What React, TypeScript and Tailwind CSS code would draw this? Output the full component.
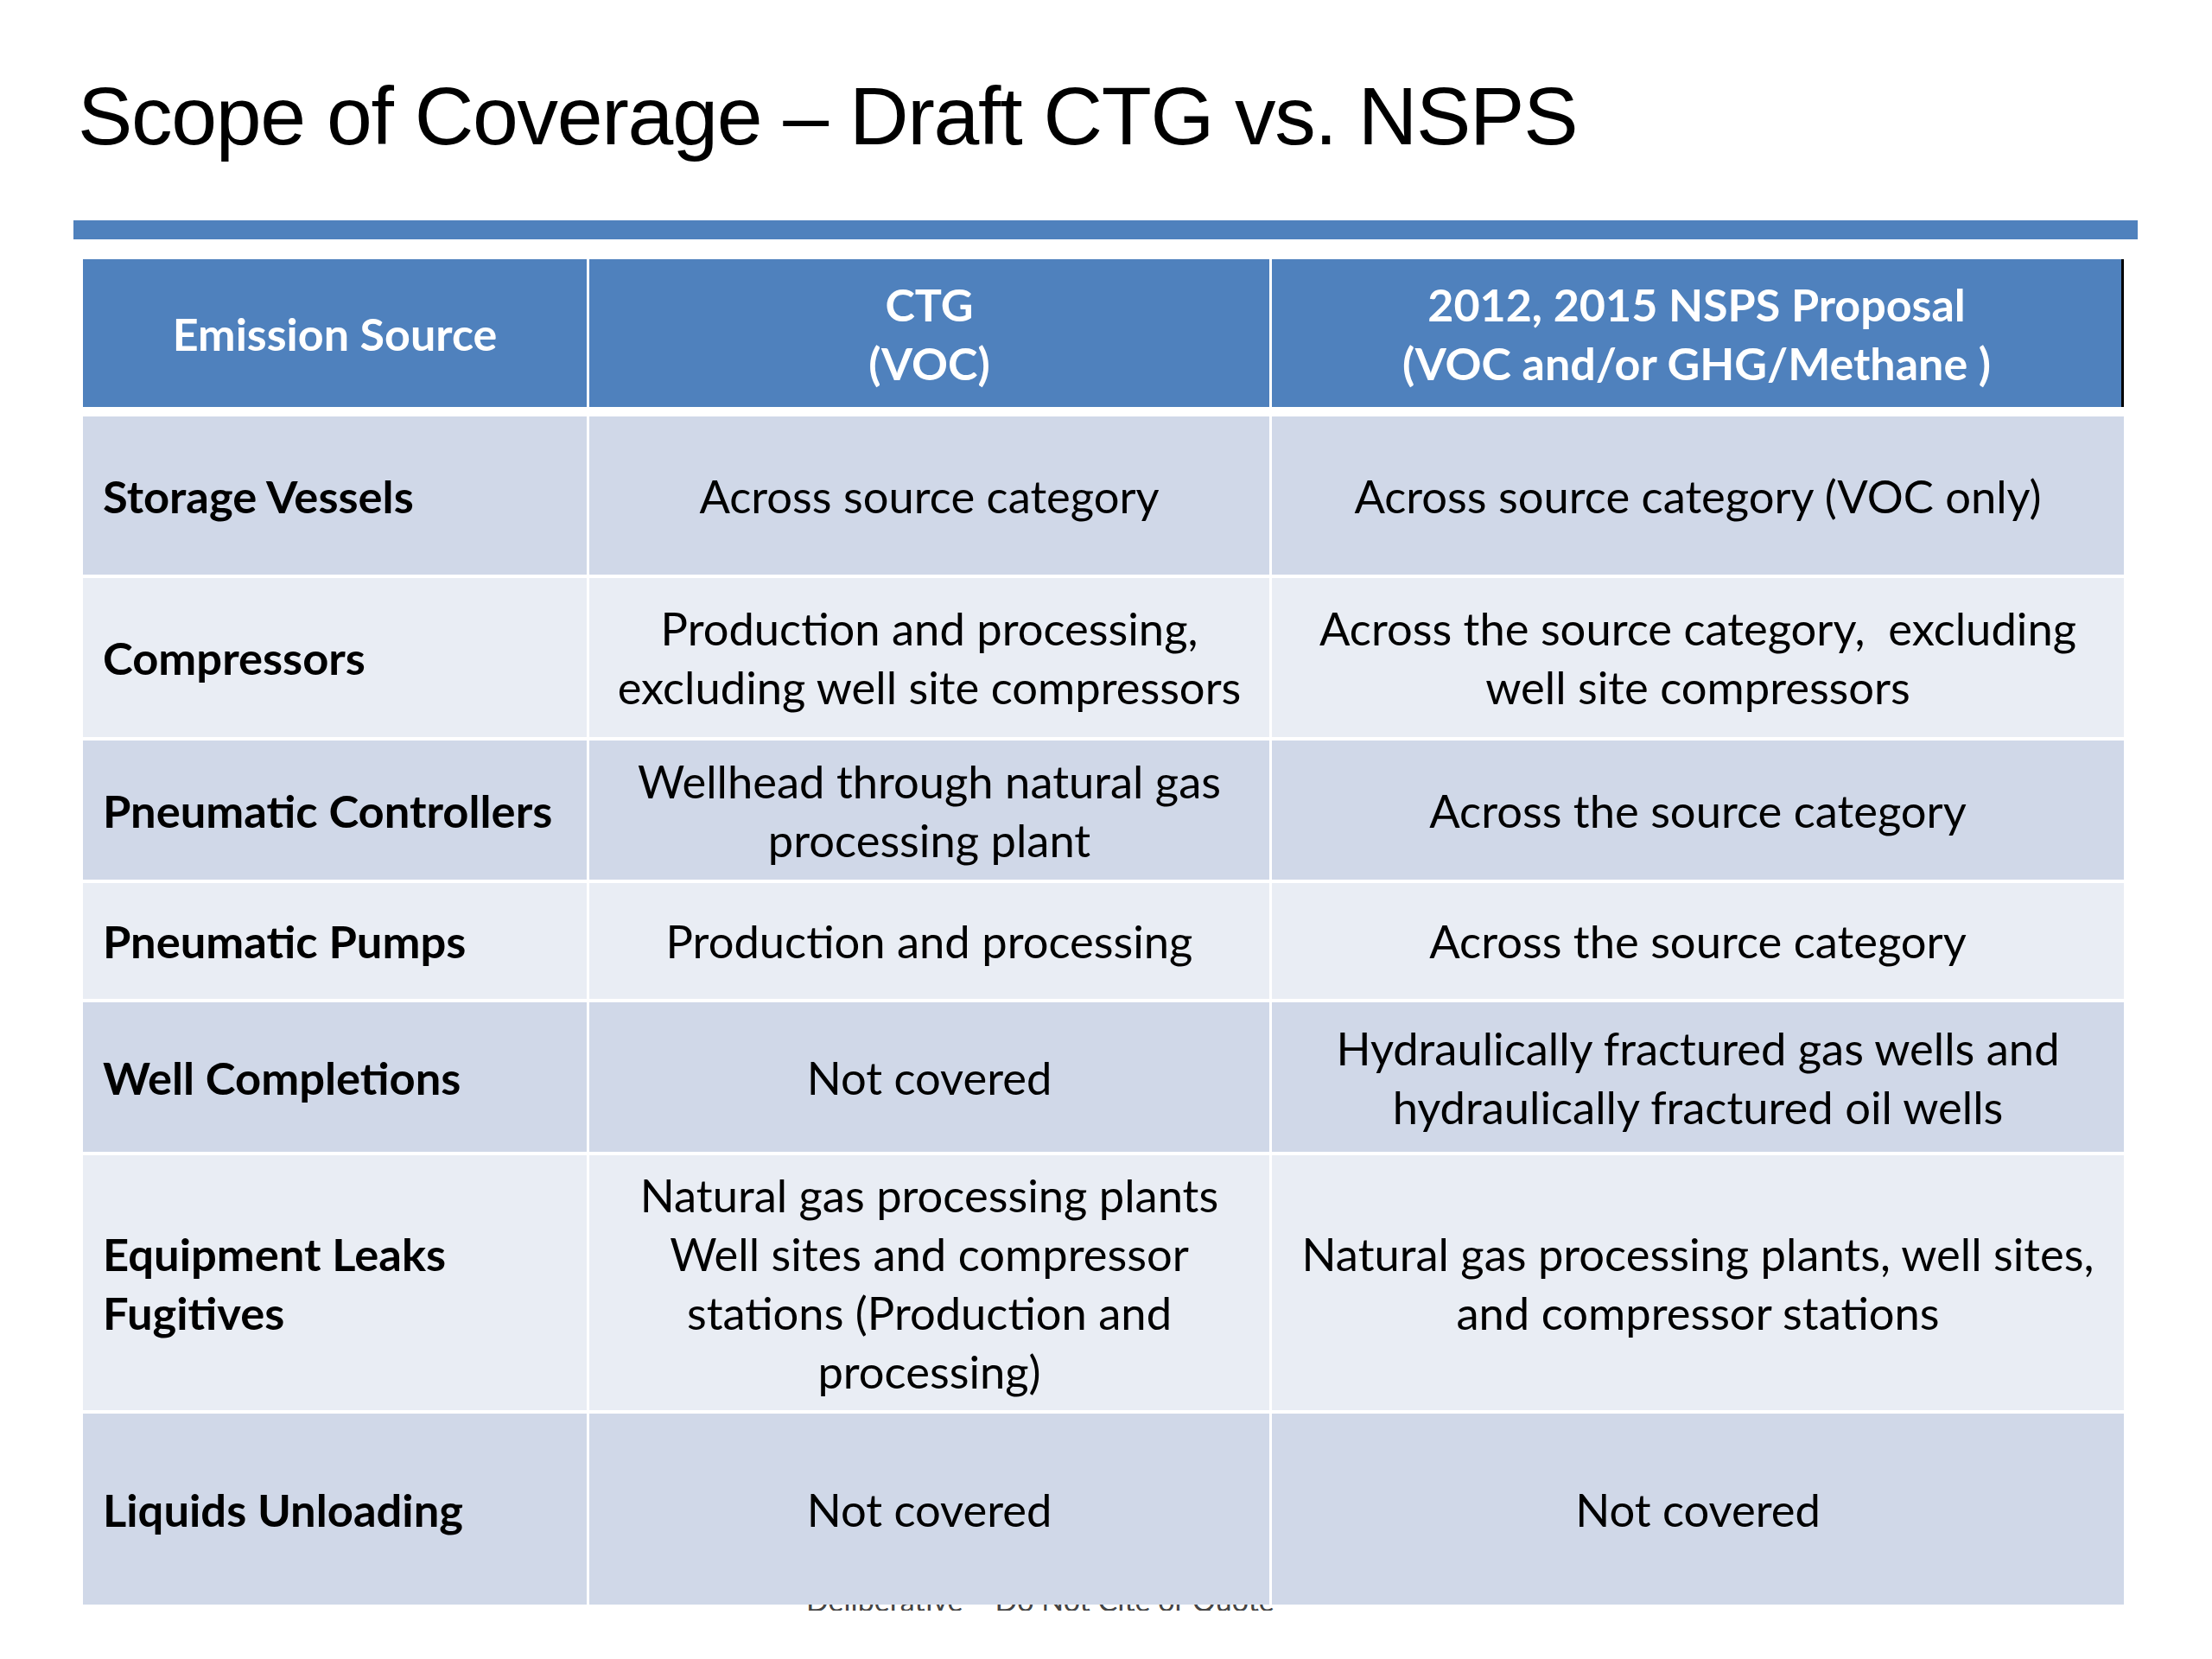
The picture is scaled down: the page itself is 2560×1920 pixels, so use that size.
import React from "react";

type Row = {
  h: string;
  bg: string;
  c1: string[];
  c2: string[];
  c3: string[];
};

const DARK = "bg-[#d0d8e8]";
const LIGHT = "bg-[#e9edf4]";

const rows: Row[] = [
  { h: "h-[183px]", bg: DARK, c1: ["Storage Vessels"], c2: ["Across source category"], c3: ["Across source category (VOC only)"] },
  {
    h: "h-[184px]",
    bg: LIGHT,
    c1: ["Compressors"],
    c2: ["Production and processing,", "excluding well site compressors"],
    c3: ["Across the source category,\u00a0 excluding", "well site compressors"],
  },
  {
    h: "h-[161px]",
    bg: DARK,
    c1: ["Pneumatic Controllers"],
    c2: ["Wellhead through natural gas", "processing plant"],
    c3: ["Across the source category"],
  },
  { h: "h-[134px]", bg: LIGHT, c1: ["Pneumatic Pumps"], c2: ["Production and processing"], c3: ["Across the source category"] },
  {
    h: "h-[173px]",
    bg: DARK,
    c1: ["Well Completions"],
    c2: ["Not covered"],
    c3: ["Hydraulically fractured gas wells and", "hydraulically fractured oil wells"],
  },
  {
    h: "h-[295px]",
    bg: LIGHT,
    c1: ["Equipment Leaks", "Fugitives"],
    c2: ["Natural gas processing plants", "Well sites and compressor", "stations (Production and", "processing)"],
    c3: ["Natural gas processing plants, well sites,", "and compressor stations"],
  },
  { h: "h-[221px]", bg: DARK, c1: ["Liquids Unloading"], c2: ["Not covered"], c3: ["Not covered"] },
];

function Lines({ lines }: { lines: string[] }) {
  return (
    <>
      {lines.map((l, i) => (
        <div key={i} className="whitespace-nowrap">
          {l}
        </div>
      ))}
    </>
  );
}

export default function App() {
  return (
    <div className="w-[2560px] h-[1920px] bg-white flex flex-col overflow-hidden">
      <div
        className="mt-[87px] ml-[90px] text-[95px] leading-[95px] tracking-[-1.3px] text-black whitespace-nowrap"
        style={{ fontFamily: '"Liberation Sans", Arial, sans-serif' }}
      >
        Scope of Coverage – Draft CTG vs. NSPS
      </div>

      <div className="mt-[73px] ml-[85px] w-[2389px] h-[22px] bg-[#4f81bd]" />

      <div
        className="mt-[23px] ml-[96px] w-[2365px] flex flex-col text-[52.5px] leading-[68px] text-black"
        style={{ fontFamily: 'Lato, "Open Sans", sans-serif' }}
      >
        {/* header */}
        <div className="flex h-[171px] gap-x-[3px] text-white font-bold text-[52px]">
          <div className="w-[583px] bg-[#4f81bd] flex items-center justify-center text-center">
            <Lines lines={["Emission Source"]} />
          </div>
          <div className="w-[787px] bg-[#4f81bd] flex flex-col items-center justify-center text-center">
            <Lines lines={["CTG", "(VOC)"]} />
          </div>
          <div className="w-[986px] bg-[#4f81bd] border-r-[3px] border-black flex flex-col items-center justify-center text-center">
            <Lines lines={["2012, 2015 NSPS Proposal", "(VOC and/or GHG/Methane )"]} />
          </div>
        </div>

        <div className="mt-[11px] w-[2362px] flex flex-col gap-y-[4px]">
          {rows.map((r, i) => (
            <div key={i} className={`flex gap-x-[3px] ${r.h}`}>
              <div className={`w-[583px] ${r.bg} flex flex-col justify-center pl-[23px] font-bold`}>
                <Lines lines={r.c1} />
              </div>
              <div className={`w-[787px] ${r.bg} flex flex-col items-center justify-center text-center`}>
                <Lines lines={r.c2} />
              </div>
              <div className={`w-[986px] ${r.bg} flex flex-col items-center justify-center text-center`}>
                <Lines lines={r.c3} />
              </div>
            </div>
          ))}
        </div>
      </div>

      <div className="ml-[933px] w-[560px] h-[7px] overflow-hidden">
        <div
          className="mt-[-22px] text-[34px] leading-[34px] text-[#444] whitespace-nowrap"
          style={{ fontFamily: 'Lato, sans-serif' }}
        >
          Deliberative – Do Not Cite or Quote
        </div>
      </div>
    </div>
  );
}
